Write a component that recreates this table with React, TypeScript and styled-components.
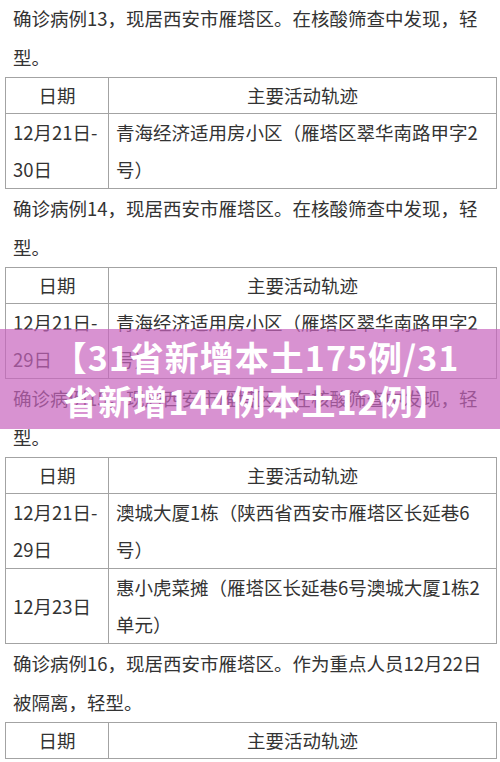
import { styled, createGlobalStyle } from "styled-components";

const GlobalStyle = createGlobalStyle`
  body {
    margin: 0;
    background: #ffffff;
    font-family: "Noto Sans CJK SC", "Noto Sans", sans-serif;
    color: #333333;
  }
`;

const Page = styled.div`
  position: relative;
  width: 500px;
  height: 762px;
  overflow: hidden;
  box-sizing: border-box;
  padding: 0 3px 0 5px;
`;

const Article = styled.div`
  margin-top: -1px;
`;

const Paragraph = styled.p`
  margin: 0;
  padding: 0 10px 0 8px;
  font-size: 18.5px;
  line-height: 39px;
`;

const TrackTable = styled.table`
  width: 100%;
  border-collapse: collapse;
  table-layout: fixed;
  font-size: 18.5px;
`;

const HeadCell = styled.th<{ $w?: number }>`
  width: ${({ $w }) => ($w ? `${$w}px` : "auto")};
  height: 35px;
  padding: 0;
  font-weight: 400;
  line-height: 35px;
  text-align: center;
  border: 1px solid #a3a3a3;
`;

const Cell = styled.td`
  padding: 0 10px 0 7px;
  line-height: 37px;
  vertical-align: middle;
  border: 1px solid #a3a3a3;
  word-break: break-all;
`;

const DateCell = styled(Cell)`
  padding-right: 0;
  word-break: normal;
`;

const DateStart = styled.span`
  white-space: nowrap;
`;

const Banner = styled.div`
  position: absolute;
  top: 329px;
  left: 0;
  right: 0;
  height: 100px;
  display: flex;
  align-items: center;
  justify-content: center;
  background: rgba(200, 100, 190, 0.7);
  color: #ffffff;
  font-weight: 700;
  font-size: 34px;
  letter-spacing: 1px;
  line-height: 44px;
  text-align: center;
  padding-left: 12px;
`;

type Row = { date: string; place: string };
type Case = { intro: string; rows: Row[] };

const cases: Case[] = [
  {
    intro: "确诊病例13，现居西安市雁塔区。在核酸筛查中发现，轻型。",
    rows: [{ date: "12月21日-30日", place: "青海经济适用房小区（雁塔区翠华南路甲字2号）" }],
  },
  {
    intro: "确诊病例14，现居西安市雁塔区。在核酸筛查中发现，轻型。",
    rows: [{ date: "12月21日-29日", place: "青海经济适用房小区（雁塔区翠华南路甲字2号）" }],
  },
  {
    intro: "确诊病例15，现居西安市雁塔区。在核酸筛查中发现，轻型。",
    rows: [
      { date: "12月21日-29日", place: "澳城大厦1栋（陕西省西安市雁塔区长延巷6号）" },
      { date: "12月23日", place: "惠小虎菜摊（雁塔区长延巷6号澳城大厦1栋2单元）" },
    ],
  },
  {
    intro: "确诊病例16，现居西安市雁塔区。作为重点人员12月22日被隔离，轻型。",
    rows: [],
  },
];

// 日期区间在“-”之后换行
const renderDate = (date: string) => {
  const i = date.indexOf("-");
  if (i < 0) return date;
  return (
    <>
      <DateStart>{date.slice(0, i + 1)}</DateStart>
      <wbr />
      {date.slice(i + 1)}
    </>
  );
};

const App = () => {
  return (
    <Page>
      <GlobalStyle />
      <Article>
        {cases.map((c) => (
          <div key={c.intro}>
            <Paragraph>{c.intro}</Paragraph>
            <TrackTable>
              <thead>
                <tr>
                  <HeadCell $w={102}>日期</HeadCell>
                  <HeadCell>主要活动轨迹</HeadCell>
                </tr>
              </thead>
              <tbody>
                {c.rows.map((r) => (
                  <tr key={r.place}>
                    <DateCell>{renderDate(r.date)}</DateCell>
                    <Cell>{r.place}</Cell>
                  </tr>
                ))}
              </tbody>
            </TrackTable>
          </div>
        ))}
      </Article>
      <Banner>
        【31省新增本土175例/31
        <br />
        省新增144例本土12例】
      </Banner>
    </Page>
  );
};

export default App;
